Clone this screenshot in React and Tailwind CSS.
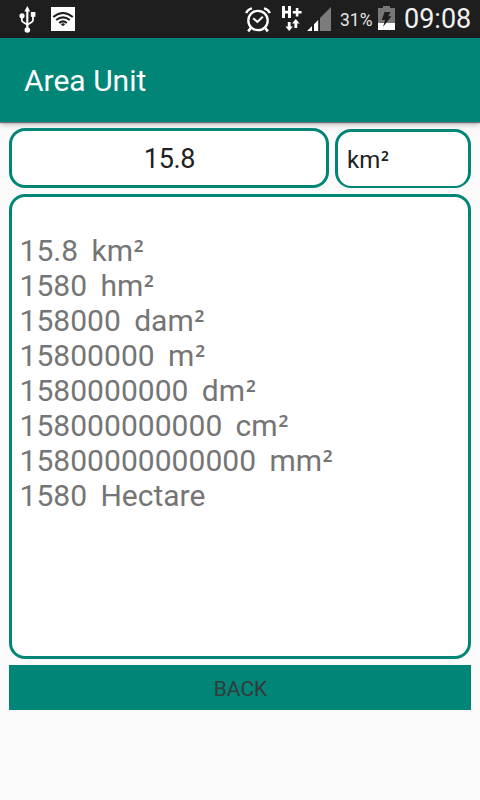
import React from "react";

const rows = [
  ["15.8", "km", true],
  ["1580", "hm", true],
  ["158000", "dam", true],
  ["15800000", "m", true],
  ["1580000000", "dm", true],
  ["158000000000", "cm", true],
  ["15800000000000", "mm", true],
  ["1580", "Hectare", false],
];

function Squared() {
  return <span className="ml-[0.03em] align-[-0.1em] font-['Noto_Sans',sans-serif] text-[0.94em] font-medium leading-none">²</span>;
}

function UsbIcon() {
  return (
    <svg width="18" height="28" viewBox="0 0 18 28" className="ml-[18px] mt-[6px] shrink-0" fill="none" stroke="#fff" strokeWidth="1.8">
      <path d="M9.3 4V24" strokeWidth="2.2" />
      <path d="M9.3 0L12.2 5.5H6.4Z" fill="#fff" stroke="none" />
      <path d="M3.8 10V14Q3.8 15.5 5.3 16.3L9 18.5" />
      <path d="M15 9V14Q15 15.5 13.5 16.3L9 19" />
      <circle cx="4" cy="9.8" r="2.6" fill="#fff" stroke="none" />
      <rect x="12.8" y="6" width="4.6" height="4.8" fill="#fff" stroke="none" />
      <circle cx="9.3" cy="24" r="2.8" fill="#fff" stroke="none" />
    </svg>
  );
}

function WifiIcon() {
  return (
    <svg width="24" height="24" viewBox="0 0 24 24" className="ml-[15px] mt-[7px] shrink-0">
      <rect width="24" height="24" fill="#fff" />
      <g fill="none" stroke="#1e1e1e" strokeWidth="2.1">
        <path d="M2.2 10Q12 2 21.8 10" />
        <path d="M5.2 13Q12 7.6 18.8 13" />
        <path d="M8.2 16Q12 12.6 15.8 16" />
      </g>
      <path d="M9.8 17.2Q12 15.4 14.2 17.2L12 19.3Z" fill="#1e1e1e" />
    </svg>
  );
}

function AlarmIcon() {
  return (
    <svg width="26" height="26" viewBox="0 0 26 26" className="mt-[7px] shrink-0" fill="none" stroke="#fff">
      <circle cx="13" cy="13.5" r="9.7" strokeWidth="2.3" />
      <path d="M8.2 11.2L12.4 15L17.8 9.8" strokeWidth="2" />
      <path d="M1.2 6.2Q2.6 2.4 7 1.4M24.8 6.2Q23.4 2.4 19 1.4" strokeWidth="2.4" />
      <path d="M6 20.8L3.2 24.4M20 20.8L22.8 24.4" strokeWidth="2.6" />
    </svg>
  );
}

function DataIcon() {
  return (
    <svg width="20" height="26" viewBox="0 0 20 26" className="ml-[11px] mt-[6px] shrink-0" fill="#fff">
      <path d="M0 0H3V4.8H6V0H9V12H6V7.4H3V12H0Z" />
      <path d="M13.8 2H16.4V5H19.6V7.5H16.4V10.6H13.8V7.5H10.8V5H13.8Z" />
      <path d="M5.8 16H8.6V20.6H11L7.2 25L3.4 20.6H5.8Z" />
      <path d="M13.8 13L17.6 17.4H15.2V22H12.4V17.4H10Z" />
    </svg>
  );
}

function SignalIcon() {
  return (
    <svg width="24" height="24" viewBox="0 0 24 24" className="ml-[5px] mt-[7px] shrink-0">
      <path d="M13 11L24 0V24H13Z" fill="#7c7c7c" />
      <path d="M0 24L5 19V24ZM7 17.3L11.2 13V24H7Z" fill="#fff" />
    </svg>
  );
}

function BatteryIcon() {
  return (
    <svg width="17" height="24" viewBox="0 0 17 24" className="ml-[5px] mt-[6px] shrink-0">
      <path d="M5 0H12V2H17V24H0V2H5Z" fill="#777" />
      <path d="M0 17H17V24H0Z" fill="#fff" />
      <path d="M6.5 6H12.5L10.3 10.2H13.4L5 21L7 14H3.8Z" fill="#1e1e1e" />
    </svg>
  );
}

export default function App() {
  return (
    <div className="flex h-[800px] w-[480px] flex-col overflow-hidden bg-[#fafafa] font-[Roboto,sans-serif]">
      <div className="flex h-[38px] shrink-0 items-start bg-[#1e1e1e] text-white">
        <UsbIcon />
        <WifiIcon />
        <div className="grow" />
        <AlarmIcon />
        <DataIcon />
        <SignalIcon />
        <span className="ml-[9px] mt-[10px] w-[33px] whitespace-nowrap text-[17.5px] leading-5 text-[#e6e6e6]">31%</span>
        <BatteryIcon />
        <span className="ml-[9px] mr-[9px] mt-[3px] w-[67px] whitespace-nowrap text-[27px] leading-8 text-[#f2f2f2]">09:08</span>
      </div>
      <header className="flex h-[84px] shrink-0 items-center bg-[#018577] pl-6 pt-[2px] shadow-[0_1px_1px_rgba(0,0,0,0.45),0_2px_6px_rgba(0,0,0,0.3)]">
        <h1 className="text-[30px] leading-9 text-white">Area Unit</h1>
      </header>
      <main className="flex flex-col gap-[6px] px-[9px] pt-[6px]">
        <div className="flex h-[60px] gap-[6px]">
          <div className="flex w-[320px] items-center justify-center rounded-[16px] border-[3px] border-[#018577] bg-white pl-px pt-[2px] text-[27px] tracking-[-0.3px] text-[#212121]">
            15.8
          </div>
          <div className="mt-px flex h-[59px] w-[136px] items-center rounded-[16px] border-[3px] border-b-2 border-[#018577] bg-white pl-[9px] pt-px text-[24px] text-[#212121]">
            <span>km<Squared /></span>
          </div>
        </div>
        <div className="h-[465px] rounded-[16px] border-[3px] border-[#018577] bg-white pl-[7.5px] pt-[36px] text-[30px] leading-[35px] text-[#757575]">
          {rows.map(([value, unit, squared]) => (
            <div key={value + unit} className="h-[35px] whitespace-pre [word-spacing:-0.8px]">
              <span className="tracking-[0.04px]">{value}</span>
              {"  " + unit}
              {squared && <Squared />}
            </div>
          ))}
        </div>
        <button className="flex h-[45px] items-center justify-center bg-[#018577] pl-px pt-[4px] text-[21px] text-[#333b39]">BACK</button>
      </main>
    </div>
  );
}
